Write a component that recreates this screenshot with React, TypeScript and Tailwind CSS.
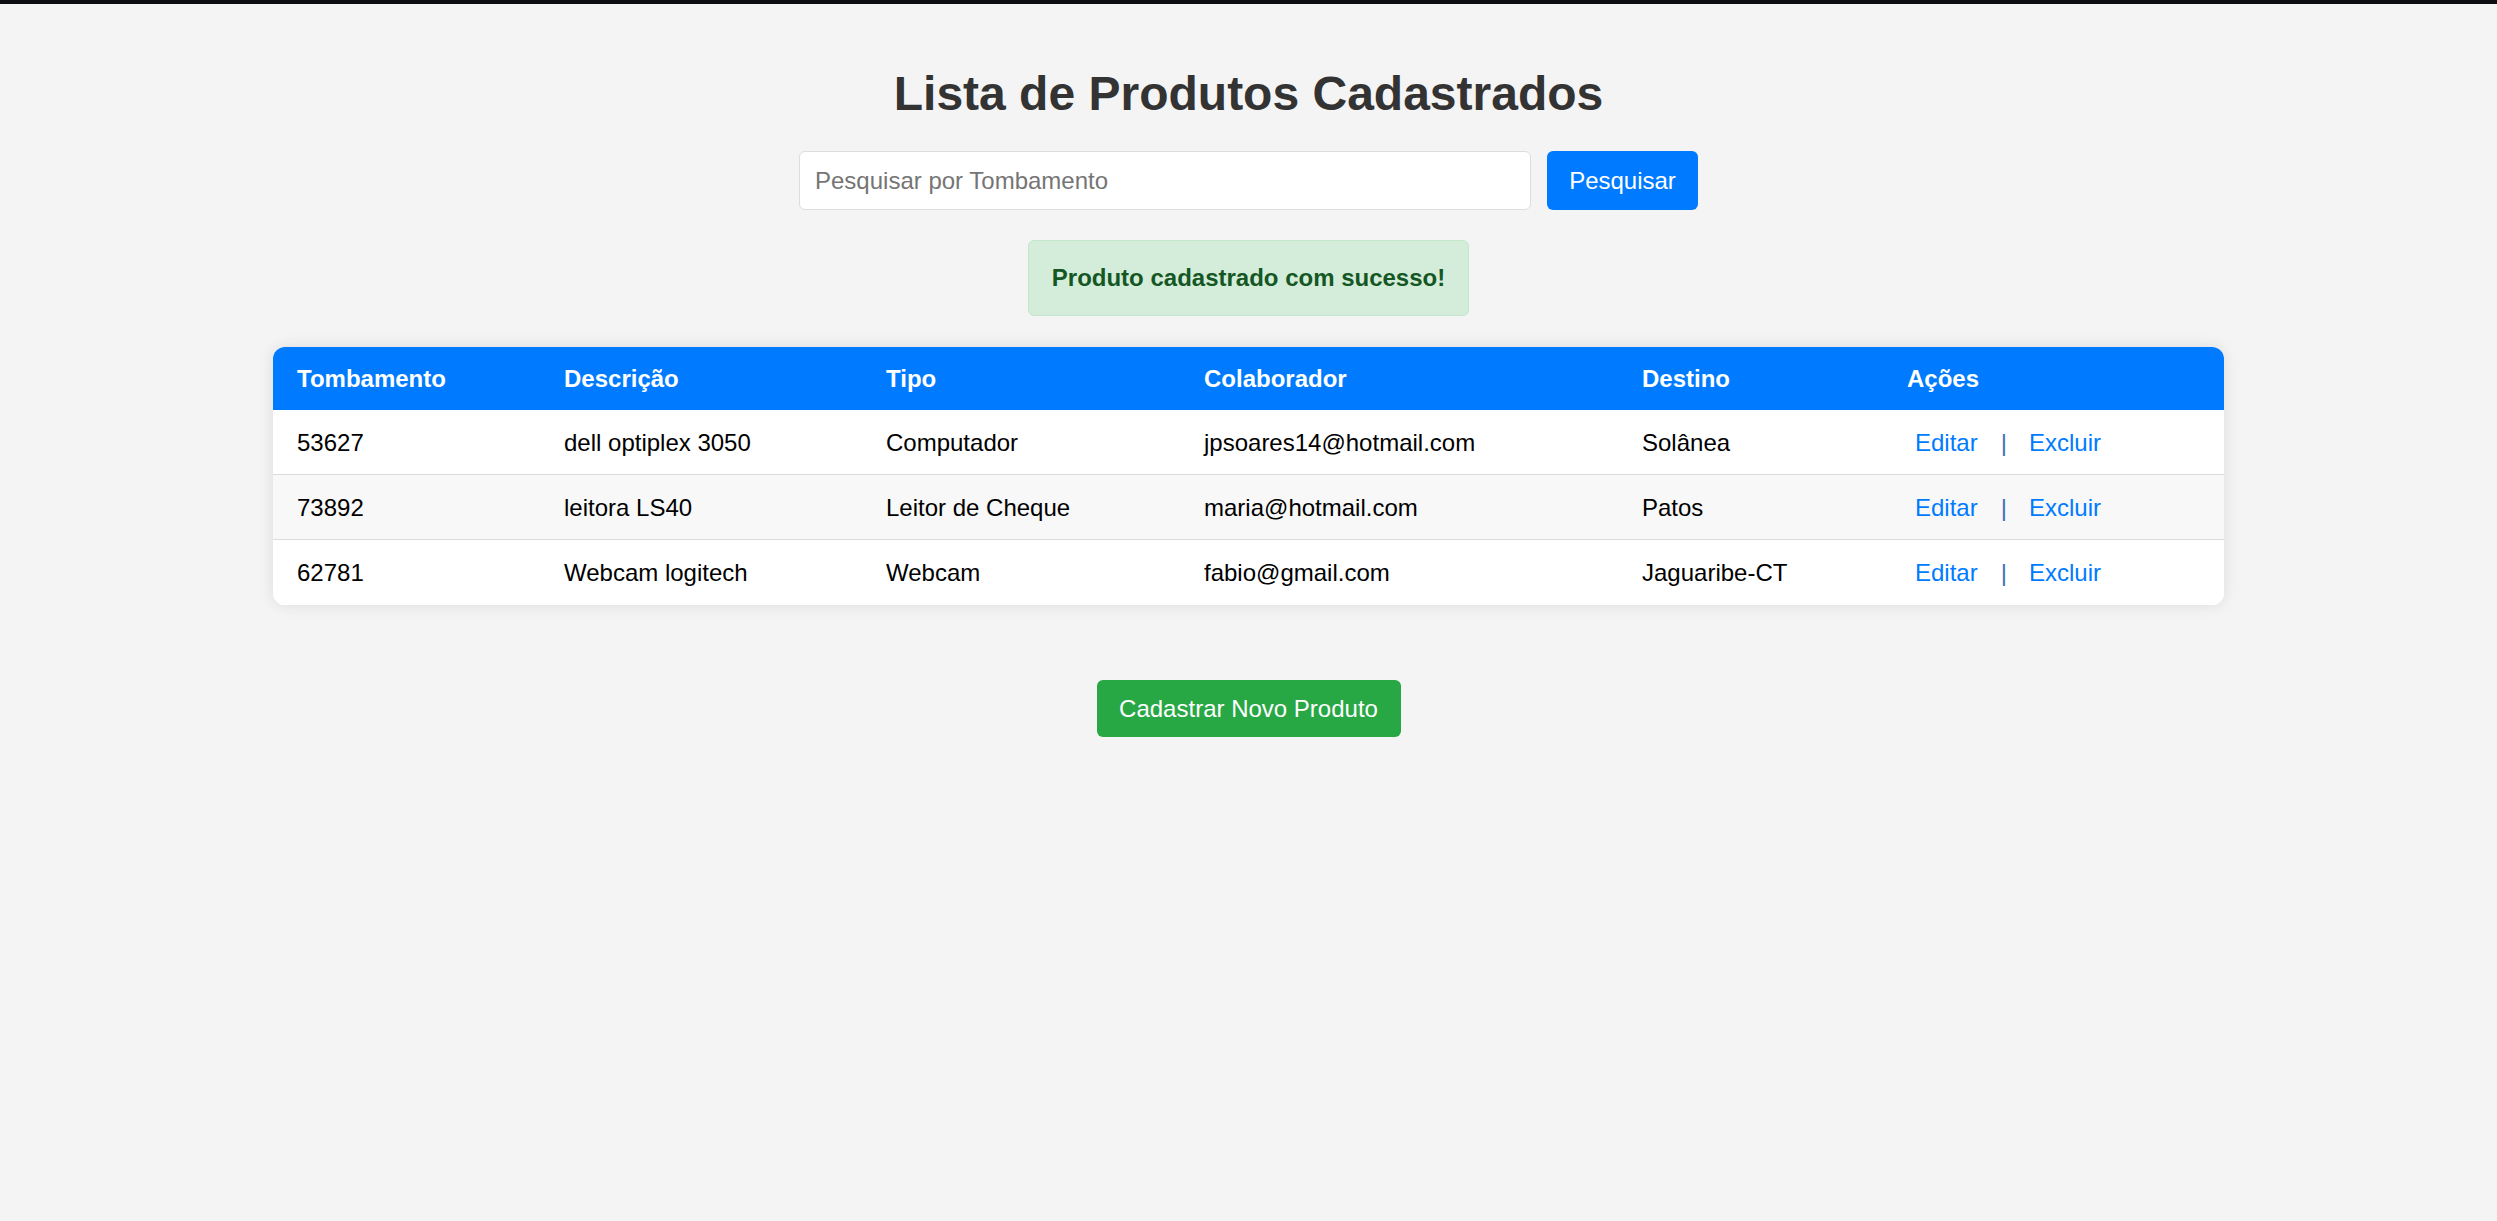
import React from "react";

const rows = [
  { t: "53627", d: "dell optiplex 3050", tipo: "Computador", c: "jpsoares14@hotmail.com", dest: "Solânea" },
  { t: "73892", d: "leitora LS40", tipo: "Leitor de Cheque", c: "maria@hotmail.com", dest: "Patos" },
  { t: "62781", d: "Webcam logitech", tipo: "Webcam", c: "fabio@gmail.com", dest: "Jaguaribe-CT" },
];

export default function App() {
  return (
    <div
      className="min-h-[1221px] w-full bg-[#f4f4f4] text-black"
      style={{ fontFamily: '"Liberation Sans", Arial, sans-serif' }}
    >
      <div className="h-[4px] w-full bg-[#0b0d10]" />
      <div className="flex flex-col items-center px-[30px]">
        <h1 className="mt-[62px] text-[48px] font-bold leading-[55px] text-[#333]">
          Lista de Produtos Cadastrados
        </h1>
        <div className="mt-[30px] flex items-center gap-[16px]">
          <input
            className="h-[59px] w-[732px] rounded-[6px] border border-[#ddd] bg-white px-[15px] text-[24px] text-[#333] outline-none placeholder:text-[#757575]"
            placeholder="Pesquisar por Tombamento"
          />
          <button className="h-[59px] w-[151px] rounded-[6px] bg-[#007bff] text-[24px] text-white">
            Pesquisar
          </button>
        </div>
        <div className="mt-[30px] rounded-[6px] border border-[#c3e6cb] bg-[#d4edda] px-[23px] py-[23px] text-[24px] font-bold leading-[28px] text-[#155724]">
          Produto cadastrado com sucesso!
        </div>
        <div className="mt-[31px] w-[1951px] overflow-hidden rounded-[12px] bg-white shadow-[0_0_15px_rgba(0,0,0,0.1)]">
          <table className="w-full table-fixed border-collapse text-left text-[24px] leading-[28px]">
            <colgroup>
              <col className="w-[267px]" />
              <col className="w-[322px]" />
              <col className="w-[318px]" />
              <col className="w-[438px]" />
              <col className="w-[265px]" />
              <col className="w-[341px]" />
            </colgroup>
            <thead>
              <tr className="bg-[#007bff] text-white">
                {["Tombamento", "Descrição", "Tipo", "Colaborador", "Destino", "Ações"].map((h) => (
                  <th key={h} className="px-[24px] pb-[17px] pt-[18px] font-bold">
                    {h}
                  </th>
                ))}
              </tr>
            </thead>
            <tbody>
              {rows.map((r, i) => (
                <tr
                  key={r.t}
                  className={`${i === 1 ? "bg-[#f8f8f8]" : "bg-white"} border-b ${i < 2 ? "border-[#dcdcdc]" : "border-white"}`}
                >
                  <td className="px-[24px] pb-[17px] pt-[19px]">{r.t}</td>
                  <td className="px-[24px] pb-[17px] pt-[19px]">{r.d}</td>
                  <td className="px-[24px] pb-[17px] pt-[19px]">{r.tipo}</td>
                  <td className="px-[24px] pb-[17px] pt-[19px]">{r.c}</td>
                  <td className="px-[24px] pb-[17px] pt-[19px]">{r.dest}</td>
                  <td className="px-[24px] pb-[17px] pt-[19px] text-[#007bff]">
                    <span className="ml-[8px]">Editar</span>
                    <span className="ml-[23px] mr-[22px] text-[#3f72b8]">|</span>
                    <span>Excluir</span>
                  </td>
                </tr>
              ))}
            </tbody>
          </table>
        </div>
        <button className="mt-[75px] h-[57px] w-[304px] rounded-[6px] bg-[#28a745] text-[24px] text-white">
          Cadastrar Novo Produto
        </button>
      </div>
    </div>
  );
}
